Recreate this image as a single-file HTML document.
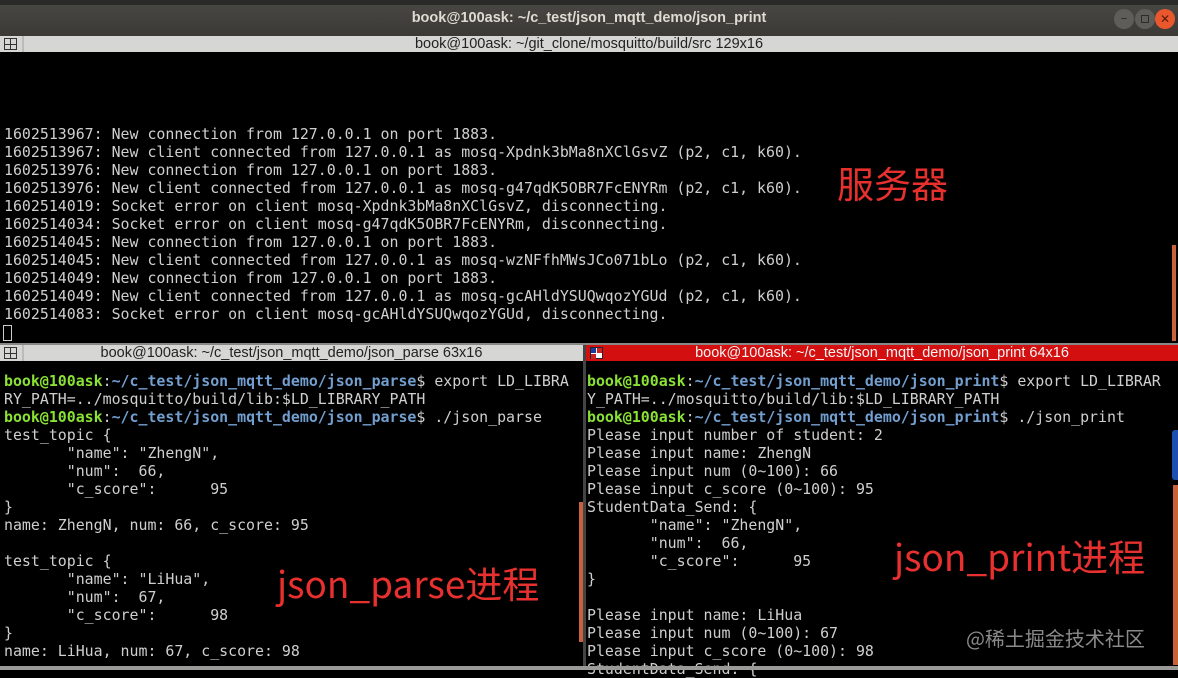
<!DOCTYPE html>
<html><head><meta charset="utf-8"><style>
*{margin:0;padding:0;box-sizing:border-box}
body{width:1178px;height:670px;background:#000;overflow:hidden;position:relative;font-family:"DejaVu Sans Mono","Liberation Mono",monospace}
.abs{position:absolute}
.t{position:absolute;white-space:pre;font-size:14.9px;line-height:18px;color:#cfcfcf;font-family:"DejaVu Sans Mono",monospace}
.g{color:#8ae234;font-weight:bold}.b{color:#729fcf;font-weight:bold}
.hdr{position:absolute;height:16px;font-family:"Liberation Sans","DejaVu Sans",sans-serif;font-size:14.5px;line-height:16px;text-align:center;color:#222}
.ic{position:absolute;left:4px;top:2px;width:13px;height:12px;border:1px solid #333}
.ic:before{content:"";position:absolute;left:5px;top:0;width:1px;height:10px;background:#333}
.ic:after{content:"";position:absolute;left:0;top:5px;width:11px;height:1px;background:#333}
.red{position:absolute;color:#e8302f;font-family:"Noto Sans CJK SC","DejaVu Sans",sans-serif;white-space:nowrap}
</style></head><body>
<div class="abs" style="left:0;top:0;width:1178px;height:36px;background:linear-gradient(#4a4945,#3a3935)"></div>
<div class="abs" style="left:0;top:0;width:1178px;height:5px;background:#2a2a28"></div>
<div class="abs" style="left:0;top:10px;width:1178px;text-align:center;color:#dfdbd2;font-family:'Liberation Sans',sans-serif;font-weight:bold;font-size:14.5px">book@100ask: ~/c_test/json_mqtt_demo/json_print</div>
<div class="abs" style="left:1114px;top:9px;width:20px;height:20px;border-radius:50%;background:#5e5d59;color:#2c2c2a;font-size:13px;text-align:center;line-height:19px;font-family:'DejaVu Sans'">–</div>
<div class="abs" style="left:1135px;top:9px;width:20px;height:20px;border-radius:50%;background:#5e5d59"><div style="position:absolute;left:6px;top:6px;width:8px;height:8px;border:1px solid #2c2c2a"></div></div>
<div class="abs" style="left:1155px;top:9px;width:20px;height:20px;border-radius:50%;background:#e9582c;color:#5a1a08;font-size:12px;text-align:center;line-height:20px;font-family:'DejaVu Sans'">✕</div>

<div class="hdr" style="left:0;top:36px;width:1178px;background:#d6d6d4">book@100ask: ~/git_clone/mosquitto/build/src 129x16</div>
<div class="ic" style="top:38px"></div><div class="abs" style="left:22px;top:36px;width:2px;height:16px;background:#bbb"></div>

<div class="t" style="left:4px;top:125px">1602513967: New connection from 127.0.0.1 on port 1883.
1602513967: New client connected from 127.0.0.1 as mosq-Xpdnk3bMa8nXClGsvZ (p2, c1, k60).
1602513976: New connection from 127.0.0.1 on port 1883.
1602513976: New client connected from 127.0.0.1 as mosq-g47qdK5OBR7FcENYRm (p2, c1, k60).
1602514019: Socket error on client mosq-Xpdnk3bMa8nXClGsvZ, disconnecting.
1602514034: Socket error on client mosq-g47qdK5OBR7FcENYRm, disconnecting.
1602514045: New connection from 127.0.0.1 on port 1883.
1602514045: New client connected from 127.0.0.1 as mosq-wzNFfhMWsJCo071bLo (p2, c1, k60).
1602514049: New connection from 127.0.0.1 on port 1883.
1602514049: New client connected from 127.0.0.1 as mosq-gcAHldYSUQwqozYGUd (p2, c1, k60).
1602514083: Socket error on client mosq-gcAHldYSUQwqozYGUd, disconnecting.</div>
<div class="abs" style="left:3px;top:325px;width:9px;height:16px;border:1px solid #ccc"></div>
<div class="abs" style="left:1172px;top:245px;width:4px;height:96px;background:#c8623a"></div>
<div class="red" style="left:837px;top:155px;font-size:37px">服务器</div>

<div class="abs" style="left:0;top:343px;width:1178px;height:2px;background:#888"></div>
<div class="hdr" style="left:0;top:345px;width:583px;background:#d6d6d4">book@100ask: ~/c_test/json_mqtt_demo/json_parse 63x16</div>
<div class="ic" style="top:347px"></div><div class="abs" style="left:22px;top:345px;width:2px;height:16px;background:#bbb"></div>
<div class="abs" style="left:583px;top:345px;width:3px;height:325px;background:#444"></div>
<div class="hdr" style="left:586px;top:345px;width:592px;background:#d40f0f;color:#f4f4f4">book@100ask: ~/c_test/json_mqtt_demo/json_print 64x16</div>
<div class="abs" style="left:590px;top:347px;width:13px;height:12px;background:#fff;border:1px solid #223"><div style="position:absolute;left:0;top:0;width:5px;height:5px;background:#1b3b9a"></div><div style="position:absolute;left:6px;top:0;width:5px;height:5px;background:#c22"></div><div style="position:absolute;left:0;top:6px;width:5px;height:5px;background:#c22"></div></div>

<div class="t" style="left:4px;top:372px"><span class="g">book@100ask</span>:<span class="b">~/c_test/json_mqtt_demo/json_parse</span>$ export LD_LIBRA
RY_PATH=../mosquitto/build/lib:$LD_LIBRARY_PATH
<span class="g">book@100ask</span>:<span class="b">~/c_test/json_mqtt_demo/json_parse</span>$ ./json_parse
test_topic {
       "name": "ZhengN",
       "num":  66,
       "c_score":      95
}
name: ZhengN, num: 66, c_score: 95

test_topic {
       "name": "LiHua",
       "num":  67,
       "c_score":      98
}
name: LiHua, num: 67, c_score: 98</div>
<div class="abs" style="left:579px;top:502px;width:4px;height:140px;background:#c8623a"></div>
<div class="red" style="left:277px;top:555px;font-size:37px">json_parse进程</div>

<div class="t" style="left:587px;top:372px"><span class="g">book@100ask</span>:<span class="b">~/c_test/json_mqtt_demo/json_print</span>$ export LD_LIBRAR
Y_PATH=../mosquitto/build/lib:$LD_LIBRARY_PATH
<span class="g">book@100ask</span>:<span class="b">~/c_test/json_mqtt_demo/json_print</span>$ ./json_print
Please input number of student: 2
Please input name: ZhengN
Please input num (0~100): 66
Please input c_score (0~100): 95
StudentData_Send: {
       "name": "ZhengN",
       "num":  66,
       "c_score":      95
}

Please input name: LiHua
Please input num (0~100): 67
Please input c_score (0~100): 98
StudentData_Send: {</div>
<div class="abs" style="left:1172px;top:430px;width:6px;height:50px;background:#1d4fb0;border-radius:3px 0 0 3px"></div>
<div class="abs" style="left:1173px;top:485px;width:5px;height:180px;background:#c8623a"></div>
<div class="red" style="left:894px;top:528px;font-size:37px">json_print进程</div>
<div class="abs" style="left:966px;top:623px;color:#8a8a8a;font-size:20px;font-family:'Noto Sans CJK SC',sans-serif;white-space:nowrap">@稀土掘金技术社区</div>
<div class="abs" style="left:0;top:666px;width:1178px;height:4px;background:#9a9a98"></div>
</body></html>
